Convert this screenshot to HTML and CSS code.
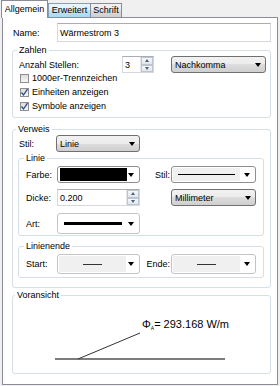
FILE: index.html
```html
<!DOCTYPE html>
<html lang="de">
<head>
    <meta charset="UTF-8">
    <title>Eigenschaften</title>
    <link rel="stylesheet" href="styles.css">
</head>
<body>
    <div class="tabs">
        <div class="tab active">Allgemein</div>
        <div class="tab hot">Erweitert</div>
        <div class="tab last">Schrift</div>
    </div>

    <div class="panel">
        <div class="row name-row">
            <span class="lbl w-name">Name:</span>
            <div class="textbox w-namebox">Wärmestrom 3</div>
        </div>

        <!-- Zahlen -->
        <fieldset class="group zahlen">
            <legend>Zahlen</legend>
            <div class="row">
                <span class="lbl w-anzahl">Anzahl Stellen:</span>
                <div class="textbox spin w-spin3">
                    <span>3</span>
                    <span class="spin-btns"><i class="up"></i><i class="down"></i></span>
                </div>
                <div class="combo w-nach">Nachkomma<span class="arrow"></span></div>
            </div>
            <div class="check first"><span class="box"></span>1000er-Trennzeichen</div>
            <div class="check"><span class="box on"><svg width="9" height="9" viewBox="0 0 9 9"><path d="M1.5 4.5 L3.5 7 L7.5 1.2" fill="none" stroke="#2d4a8a" stroke-width="1.3"/></svg></span>Einheiten anzeigen</div>
            <div class="check"><span class="box on"><svg width="9" height="9" viewBox="0 0 9 9"><path d="M1.5 4.5 L3.5 7 L7.5 1.2" fill="none" stroke="#2d4a8a" stroke-width="1.3"/></svg></span>Symbole anzeigen</div>
        </fieldset>

        <!-- Verweis -->
        <fieldset class="group verweis">
            <legend>Verweis</legend>
            <div class="row stil-row">
                <span class="lbl w-stil">Stil:</span>
                <div class="combo w-linie">Linie<span class="arrow"></span></div>
            </div>

            <fieldset class="group sub linie">
                <legend>Linie</legend>
                <div class="row farbe-row">
                    <span class="lbl w-sub">Farbe:</span>
                    <div class="picker w-left"><span class="color-fill"></span><span class="arrow"></span></div>
                    <span class="lbl w-right">Stil:</span>
                    <div class="picker w-rightbox"><span class="swatch"><span class="stroke thin-long"></span></span><span class="arrow"></span></div>
                </div>
                <div class="row dicke-row">
                    <span class="lbl w-sub">Dicke:</span>
                    <div class="textbox spin w-left">
                        <span>0.200</span>
                        <span class="spin-btns"><i class="up"></i><i class="down"></i></span>
                    </div>
                    <span class="lbl w-right"></span>
                    <div class="combo w-rightbox">Millimeter<span class="arrow"></span></div>
                </div>
                <div class="row art-row">
                    <span class="lbl w-sub">Art:</span>
                    <div class="picker plain w-left"><span class="swatch white"><span class="stroke thick"></span></span><span class="arrow"></span></div>
                </div>
            </fieldset>

            <fieldset class="group sub ende">
                <legend>Linienende</legend>
                <div class="row ende-row">
                    <span class="lbl w-sub">Start:</span>
                    <div class="picker plain w-left"><span class="swatch"><span class="stroke short"></span></span><span class="arrow"></span></div>
                    <span class="lbl ende-lbl">Ende:</span>
                    <div class="picker plain w-rightbox"><span class="swatch"><span class="stroke short"></span></span><span class="arrow"></span></div>
                </div>
            </fieldset>
        </fieldset>

        <!-- Voransicht -->
        <fieldset class="group preview">
            <legend>Voransicht</legend>
            <svg class="canvas" width="257" height="72" viewBox="0 0 257 72">
                <line x1="42" y1="58" x2="212" y2="58" stroke="#7c7c7c" stroke-width="2"/>
                <line x1="65" y1="58" x2="127" y2="32" stroke="#333" stroke-width="1"/>
                <text x="129" y="27" font-family="Liberation Sans, Arial, sans-serif" font-size="11" fill="#000">Φ<tspan font-size="5" dy="2">A</tspan><tspan dy="-2">= 293.168 W/m</tspan></text>
            </svg>
        </fieldset>
    </div>
</body>
</html>
```

FILE: styles.css
```css
body {
    margin: 0;
    width: 280px;
    height: 386px;
    overflow: hidden;
    background-color: #f0f0f0;
    font-family: "Liberation Sans", Arial, sans-serif;
    font-size: 9px;
    color: #000;
}

/* tabs */
.tabs {
    display: flex;
    align-items: flex-end;
    height: 17px;
    padding-left: 1px;
}
.tab {
    box-sizing: border-box;
    height: 14px;
    line-height: 13px;
    text-align: center;
    border: 1px solid #898c95;
    border-bottom: none;
    background: linear-gradient(#f2f2f2, #ebebeb 50%, #dddddd 50%, #cfcfcf);
}
.tab.active {
    position: relative;
    z-index: 1;
    width: 47px;
    height: 18px;
    line-height: 16px;
    margin-bottom: -1px;
    background: #fff;
}
.tab.hot {
    width: 43px;
    background: linear-gradient(#eaf6fd, #d9f0fc 50%, #bee6fd 50%, #a7d9f5);
    border-color: #8a9db5;
}
.tab.last {
    width: 32px;
    margin-left: -1px;
}

/* panel */
.panel {
    box-sizing: border-box;
    margin-left: 2px;
    width: 276px;
    height: 368px;
    border: 1px solid #898c95;
    background: #fff;
    padding: 5px 0 0 9px;
}
.row {
    display: flex;
    align-items: center;
}
.lbl {
    flex: none;
    white-space: nowrap;
}
.name-row .w-name {
    width: 44px;
    margin-left: 1px;
}
.w-namebox {
    width: 214px;
    height: 19px;
}

/* controls */
.textbox {
    box-sizing: border-box;
    display: flex;
    align-items: center;
    padding-left: 2px;
    border: 1px solid #d5d9de;
    border-top-color: #abadb3;
    background: #fff;
}
.spin-btns {
    margin-left: auto;
    display: flex;
    flex-direction: column;
    width: 12px;
    height: 100%;
    border-left: 1px solid #e3e7eb;
}
.spin-btns i {
    flex: 1;
    box-sizing: border-box;
    border: 1px solid #bcc5d0;
    background: linear-gradient(#f6f8fa, #e1e6ec);
    display: flex;
    align-items: center;
    justify-content: center;
}
.spin-btns i::after {
    content: "";
    border-left: 2.5px solid transparent;
    border-right: 2.5px solid transparent;
}
.spin-btns .up::after {
    border-bottom: 3px solid #4b6080;
}
.spin-btns .down::after {
    border-top: 3px solid #4b6080;
}
.combo {
    box-sizing: border-box;
    display: flex;
    align-items: center;
    padding-left: 3px;
    border: 1px solid #707070;
    border-radius: 3px;
    background: linear-gradient(#f2f2f2, #ebebeb 50%, #dddddd 50%, #cfcfcf);
}
.arrow {
    flex: none;
    margin-left: auto;
    margin-right: 4px;
    border-left: 3.5px solid transparent;
    border-right: 3.5px solid transparent;
    border-top: 4px solid #000;
}
.picker {
    box-sizing: border-box;
    display: flex;
    align-items: center;
    padding: 1px;
    border: 1px solid #8e8f8f;
    border-radius: 3px;
    background: #fff;
}
.picker.plain {
    border-color: #c4c4c4;
}
.color-fill {
    display: block;
    width: 67px;
    height: 100%;
    margin-left: 1px;
    background: #000;
}
.swatch {
    display: flex;
    align-items: center;
    justify-content: center;
    width: 67px;
    height: 100%;
    background: #f0f0f0;
}
.swatch.white {
    background: #fff;
}
.stroke {
    display: block;
    background: #000;
}
.thin-long {
    width: 57px;
    height: 1px;
}
.thick {
    width: 58px;
    height: 3px;
}
.short {
    width: 19px;
    height: 1px;
    background: #333;
}

/* group boxes */
.group {
    box-sizing: border-box;
    margin: 0;
    min-width: 0;
    border: 1px solid #d5dfe5;
    border-radius: 3px;
}
.group legend {
    padding: 0 2px;
    margin-left: -2px;
    line-height: 12px;
}
.zahlen {
    width: 259px;
    margin-top: 2px;
    padding: 0 0 4px 6px;
}
.w-anzahl {
    width: 103px;
}
.w-spin3 {
    width: 32px;
    height: 17px;
}
.w-nach {
    width: 95px;
    height: 17px;
    margin-left: 17px;
}
.check {
    display: flex;
    align-items: center;
    height: 14px;
    margin-left: 1px;
}
.check.first {
    margin-top: -2px;
}
.box {
    box-sizing: border-box;
    width: 9px;
    height: 9px;
    margin-right: 3px;
    border: 1px solid #8e8f8f;
    background: linear-gradient(#dcdcdc, #f7f7f7);
    display: flex;
    align-items: center;
    justify-content: center;
}
.box svg {
    flex: none;
}

.verweis {
    width: 259px;
    margin-top: 5px;
    padding: 0 0 9px 5px;
}
.stil-row {
    margin-left: 1px;
}
.w-stil {
    width: 37px;
}
.w-linie {
    width: 84px;
    height: 17px;
}
.sub {
    width: 246px;
    padding: 0 0 1px 7px;
}
.w-sub {
    width: 31px;
}
.w-left {
    width: 83px;
    height: 17px;
}
.w-right {
    width: 16px;
    margin-left: 15px;
}
.w-rightbox {
    width: 85px;
    height: 17px;
}
.farbe-row {
    margin-top: 2px;
}
.dicke-row {
    margin-top: 6px;
}
.art-row {
    margin-top: 7px;
}
.art-row .w-left {
    height: 21px;
}
.ende {
    margin-top: 4px;
    padding-bottom: 3px;
}
.ende-row {
    margin-top: 2px;
}
.ende-row .w-left,
.ende-row .w-rightbox {
    height: 20px;
}
.ende-lbl {
    width: 26px;
    margin-left: 5px;
    text-align: right;
    padding-right: 1px;
    box-sizing: border-box;
}

.preview {
    width: 259px;
    margin-top: 1px;
    padding: 0;
}
.preview legend {
    margin-left: 2px;
}
.canvas {
    display: block;
}
```
